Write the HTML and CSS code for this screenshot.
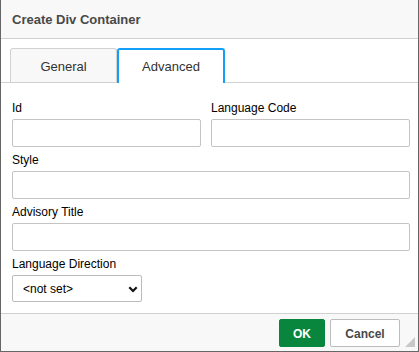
FILE: index.html
```html
<!DOCTYPE html>
<html>
<head>
<meta charset="utf-8">
<link rel="stylesheet" href="styles.css">
</head>
<body>
<div class="dialog">
  <div class="title">Create Div Container</div>
  <div class="tabs">
    <div class="tab tab-general">General</div>
    <div class="tab tab-advanced">Advanced</div>
  </div>
  <div class="panel">
    <div class="row2">
      <div class="field field-left">
        <label class="label">Id</label>
        <input class="input" type="text">
      </div>
      <div class="field">
        <label class="label">Language Code</label>
        <input class="input" type="text">
      </div>
    </div>
    <div class="field">
      <label class="label">Style</label>
      <input class="input" type="text">
    </div>
    <div class="field">
      <label class="label">Advisory Title</label>
      <input class="input" type="text">
    </div>
    <div class="field">
      <label class="label">Language Direction</label>
      <div class="select-wrap">
        <select class="select">
          <option>&lt;not set&gt;</option>
        </select>
        <svg class="chevron" width="10" height="7" viewBox="0 0 10 7"><path d="M1.3 1.3 L5 5 L8.7 1.3" fill="none" stroke="#111" stroke-width="2.2"/></svg>
      </div>
    </div>
  </div>
  <div class="footer">
    <button class="btn btn-ok">OK</button>
    <button class="btn btn-cancel">Cancel</button>
  </div>
  <svg class="resize" width="10" height="10" viewBox="0 0 10 10"><polygon points="10,0 10,10 0,10" fill="#c8c8c8"/></svg>
</div>
</body>
</html>
```
FILE: styles.css
```css
* { box-sizing: border-box; }
html, body { margin: 0; padding: 0; }
body {
  font-family: "Liberation Sans", Arial, sans-serif;
  background: #fff;
}
.dialog {
  position: relative;
  width: 419px;
  height: 352px;
  border-left: 1px solid #666;
  border-right: 1px solid #666;
  border-bottom: 1px solid #666;
  display: flex;
  flex-direction: column;
  background: #fff;
}
.title {
  height: 39px;
  flex: none;
  padding-left: 11px;
  display: flex;
  align-items: center;
  background: #f8f8f8;
  border-bottom: 1px solid #d1d1d1;
  font-weight: bold;
  font-size: 13px;
  color: #484848;
}
.tabs {
  display: flex;
  padding: 9px 0 0 9px;
  border-bottom: 1px solid #d1d1d1;
  flex: none;
}
.tab {
  display: flex;
  align-items: center;
  justify-content: center;
  font-size: 13px;
  color: #333;
  border-radius: 3px 3px 0 0;
}
.tab-general {
  width: 107px;
  height: 34px;
  background: #f8f8f8;
  border: 1px solid #d1d1d1;
  border-bottom: none;
  padding-top: 1px;
}
.tab-advanced {
  width: 108px;
  height: 35px;
  margin-bottom: -1px;
  background: #fff;
  border: 2px solid #139ff7;
  border-bottom: none;
  padding-bottom: 1px;
}
.panel {
  padding: 18px 8px 0 11px;
}
.row2 {
  display: grid;
  grid-template-columns: 1fr 1fr;
}
.field-left { padding-right: 10px; }
.field { margin-bottom: 6px; }
.label {
  display: block;
  font-size: 12px;
  line-height: 14px;
  color: #000;
  margin-bottom: 4px;
}
.input {
  display: block;
  width: 100%;
  height: 28px;
  border: 1px solid #c4c4c4;
  border-radius: 2px;
  background: #fff;
  margin: 0;
  padding: 0 6px;
  font-family: inherit;
  font-size: 12px;
}
.select-wrap {
  position: relative;
  width: 130px;
  height: 27px;
}
.select {
  appearance: none;
  -webkit-appearance: none;
  width: 100%;
  height: 100%;
  border: 1px solid #bcbcbc;
  border-radius: 2px;
  background: #fff;
  padding: 0 0 0 10px;
  margin: 0;
  font-family: inherit;
  font-size: 12px;
  color: #000;
}
.chevron {
  position: absolute;
  left: 116px;
  top: 11px;
  pointer-events: none;
}
.footer {
  margin-top: auto;
  height: 38px;
  flex: none;
  background: #f8f8f8;
  border-top: 1px solid #d1d1d1;
  display: flex;
  justify-content: flex-end;
  align-items: flex-start;
  gap: 5px;
  padding: 5px 18px 0 0;
}
.btn {
  height: 28px;
  border-radius: 2px;
  font-family: inherit;
  font-weight: bold;
  font-size: 12px;
  padding: 1px 0 0;
  margin: 0;
  text-align: center;
}
.btn-ok {
  width: 46px;
  background: #09863e;
  border: 1px solid #09863e;
  color: #fff;
}
.btn-cancel {
  width: 70px;
  background: #fff;
  border: 1px solid #bcbcbc;
  color: #484848;
}
.resize {
  position: absolute;
  right: 3px;
  bottom: 4px;
}
```
